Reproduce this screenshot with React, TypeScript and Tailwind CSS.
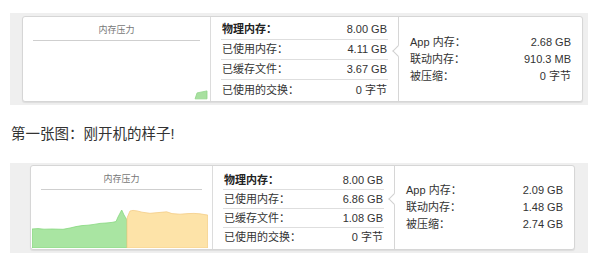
import type { ReactNode } from "react";

type Row = { label: string; value: string; bold?: boolean };

const font = { fontFamily: '"Liberation Sans", "Noto Sans CJK SC", sans-serif' };

function MiddleRows({ rows, rowH }: { rows: Row[]; rowH: string }) {
  return (
    <div className="flex flex-col">
      {rows.map((r, i) => (
        <div
          key={r.label}
          className={`mx-[10px] flex items-center justify-between px-[1px] ${rowH} ${
            i < rows.length - 1 ? "border-b border-[#dedede]" : ""
          }`}
        >
          <span className={r.bold ? "font-bold text-[#222]" : "text-[#333]"}>{r.label}</span>
          <span className="text-[#333]">{r.value}</span>
        </div>
      ))}
    </div>
  );
}

function SideRows({ rows }: { rows: Row[] }) {
  return (
    <div className="flex flex-col">
      {rows.map((r) => (
        <div key={r.label} className="flex h-[17px] items-center justify-between">
          <span className="text-[#333]">{r.label}</span>
          <span className="text-[#333]">{r.value}</span>
        </div>
      ))}
    </div>
  );
}

function Panel({
  card,
  left,
  mid,
  chart,
  middle,
  side,
  rowH,
  midPt,
  notchTop,
}: {
  card: string;
  left: string;
  mid: string;
  chart: ReactNode;
  middle: Row[];
  side: Row[];
  rowH: string;
  midPt: string;
  notchTop: string;
}) {
  return (
    <div className={`ml-[10px] w-[578px] bg-[#efefef] ${card}`}>
      <div className="flex h-full rounded-[3px] border border-[#d6d6d6] bg-white text-[11px] shadow-[0_1px_1px_rgba(0,0,0,0.08)]">
        <div className={`flex flex-col border-r border-[#dcdcdc] ${left}`}>
          <div className="pt-[7px] text-center text-[9px] leading-[12px] text-[#777]">内存压力</div>
          <div className="mx-[10px] mt-[4px] border-b border-[#cfcfcf]" />
          <div className="flex flex-1 items-end px-[1px] pb-[1px]">{chart}</div>
        </div>
        <div className={`${mid} ${midPt}`}>
          <MiddleRows rows={middle} rowH={rowH} />
        </div>
        <div className="relative flex flex-1 flex-col justify-center border-l border-[#d6d6d6] px-[11px]">
          <div
            className={`absolute left-[-5px] h-[8px] w-[8px] rotate-45 border-b border-l border-[#d0d0d0] bg-white ${notchTop}`}
          />
          <SideRows rows={side} />
        </div>
      </div>
    </div>
  );
}

function ChartEmpty() {
  return (
    <svg width="186" height="50" viewBox="0 0 186 50" className="block">
      <polygon points="172,49 174,43 184,41 184,49" fill="#a8e0a0" stroke="#8fd487" strokeWidth="0.8" />
    </svg>
  );
}

function ChartBusy() {
  return (
    <svg width="176" height="43" viewBox="0 0 176 43" className="block">
      <polygon
        points="0,24 6,23.6 12,24.2 20,24 31,24.3 38,23 44,21.6 50,20.6 56,20.2 62,19.4 68,18.4 74,18 80,17.4 84,16.6 86,12 89.7,5 92,10 93.5,12.5 95,15 95,43 0,43"
        fill="#a9e5a2"
        stroke="#86d87f"
        strokeWidth="0.8"
      />
      <polygon
        points="95,13 98,6 101,5.4 105,5.9 110,7.2 118,8.3 126,7.6 134.7,6.8 140,8.6 148,9.2 156,8.6 162,8.4 168,8.8 172,9.5 175.7,10 175.7,43 95,43"
        fill="#fde3a8"
        stroke="#f4cd86"
        strokeWidth="0.8"
      />
    </svg>
  );
}

export default function App() {
  return (
    <div className="h-[268px] w-[607px] overflow-hidden bg-white pt-[13px]" style={font}>
      <Panel
        card="h-[92px] pl-[12px] pr-[5px] pt-[3px] pb-[3px]"
        left="w-[188px]"
        mid="w-[187px]"
        midPt="pt-[3px]"
        rowH="h-[20px]"
        notchTop="top-[30px]"
        chart={<ChartEmpty />}
        middle={[
          { label: "物理内存：", value: "8.00 GB", bold: true },
          { label: "已使用内存：", value: "4.11 GB" },
          { label: "已缓存文件：", value: "3.67 GB" },
          { label: "已使用的交换：", value: "0 字节" },
        ]}
        side={[
          { label: "App 内存：", value: "2.68 GB" },
          { label: "联动内存：", value: "910.3 MB" },
          { label: "被压缩：", value: "0 字节" },
        ]}
      />
      <div className="mt-[19px] pl-[11px] text-[14.5px] leading-[20px] text-[#333]">第一张图：刚开机的样子!</div>
      <div className="mt-[19px]">
        <Panel
          card="h-[90px] pl-[20px] pr-[13px] pt-[2px] pb-[3px]"
          left="w-[182px]"
          mid="w-[181px]"
          midPt="pt-[5px]"
          rowH="h-[19px]"
          notchTop="top-[29px]"
          chart={<ChartBusy />}
          middle={[
            { label: "物理内存：", value: "8.00 GB", bold: true },
            { label: "已使用内存：", value: "6.86 GB" },
            { label: "已缓存文件：", value: "1.08 GB" },
            { label: "已使用的交换：", value: "0 字节" },
          ]}
          side={[
            { label: "App 内存：", value: "2.09 GB" },
            { label: "联动内存：", value: "1.48 GB" },
            { label: "被压缩：", value: "2.74 GB" },
          ]}
        />
      </div>
    </div>
  );
}
